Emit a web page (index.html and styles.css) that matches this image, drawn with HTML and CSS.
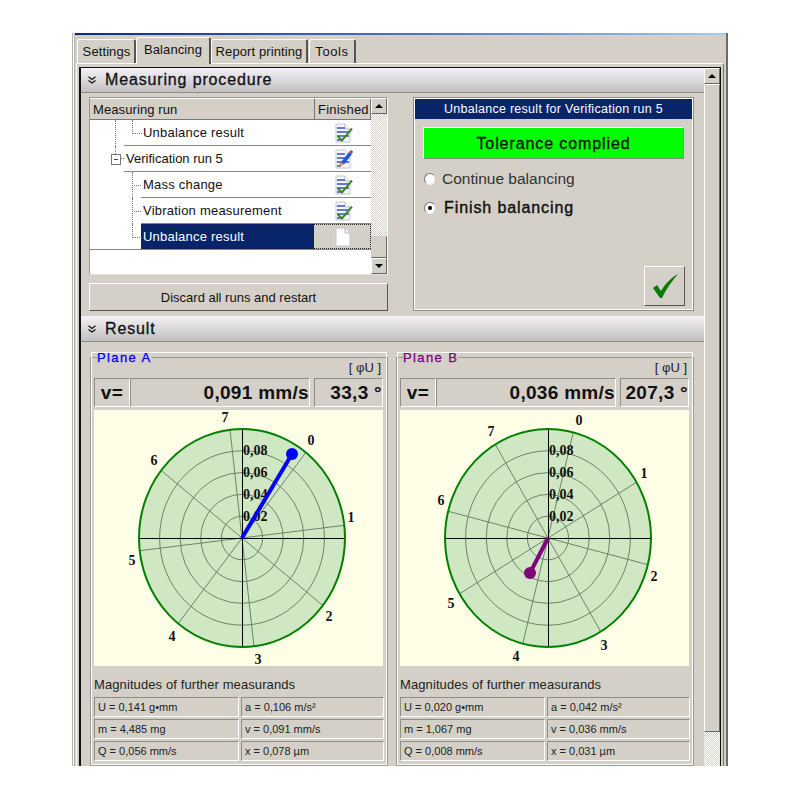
FILE: index.html
```html
<!DOCTYPE html>
<html lang="en">
<head>
  <meta charset="UTF-8">
  <title>Balancing</title>
  <link rel="stylesheet" href="styles.css">
</head>
<body>
  <svg class="defs" width="0" height="0">
    <defs>
      <symbol id="doc" viewBox="0 0 18 20">
        <path d="M1 1H10L15 6V19H1Z" fill="#fff" stroke="#c6c6d2"/>
        <path d="M10 1V6H15" fill="#f0f0f4" stroke="#b8b8c4"/>
      </symbol>
      <symbol id="doc_done" viewBox="0 0 18 20">
        <path d="M1 1H10L15 6V19H1Z" fill="#f6f6fb" stroke="#c6c6d2"/>
        <path d="M10 1V6H15" fill="#fff" stroke="#b8b8c4"/>
        <path d="M2 5H10M2 9H14M2 13H14M2 17H6" stroke="#6478e0" stroke-width="2"/>
        <path d="M2.500 13L7 17.500L17 5.500" fill="none" stroke="#3a8a20" stroke-width="2"/>
      </symbol>
      <symbol id="doc_edit" viewBox="0 0 18 20">
        <path d="M1 1H10L15 6V19H1Z" fill="#f6f6fb" stroke="#c6c6d2"/>
        <path d="M2 5H10M2 9H14M2 13H14M2 17H6" stroke="#6478e0" stroke-width="2"/>
        <path d="M6 13L14 3L17 5L9 15.500Z" fill="#2358d8"/>
        <path d="M3 17.500L6 13L9 15.500Z" fill="#e8862a"/>
        <path d="M14 3L16 1L18 2.500L17 5Z" fill="#c04030"/>
      </symbol>
      <symbol id="chevrons" viewBox="0 0 8 8">
        <path d="M.5 .8L4 3.400L7.500 .8M.5 4.400L4 7L7.500 4.400" fill="none" stroke="#111" stroke-width="1.200"/>
      </symbol>
    </defs>
  </svg>

  <div class="window">
    <div class="tabs">
      <span class="tab tab_settings">Settings</span>
      <span class="tab tab_active">Balancing</span>
      <span class="tab tab_report">Report printing</span>
      <span class="tab tab_tools">Tools</span>
    </div>

    <div class="tab_page">
      <div class="frame">
        <div class="frame_content">

          <div class="section_head section_procedure">
            <svg class="chevron" width="8" height="8"><use href="#chevrons"/></svg>Measuring procedure
          </div>
          <div class="procedure">
            <div class="left_col">
              <div class="tree">
                <div class="tree_main">
                  <div class="tree_header">
                    <span class="th_run">Measuring run</span>
                    <span class="th_done">Finished</span>
                  </div>
                  <div class="tree_row indent_2 elbow_last long_line"><span class="run_name">Unbalance result</span><span class="run_icon"><svg width="18" height="20"><use href="#doc_done"/></svg></span></div>
                  <div class="tree_row indent_1 has_minus"><span class="run_name">Verification run 5</span><span class="run_icon"><svg width="18" height="20"><use href="#doc_edit"/></svg></span></div>
                  <div class="tree_row indent_2 elbow"><span class="run_name">Mass change</span><span class="run_icon"><svg width="18" height="20"><use href="#doc_done"/></svg></span></div>
                  <div class="tree_row indent_2 elbow"><span class="run_name">Vibration measurement</span><span class="run_icon"><svg width="18" height="20"><use href="#doc_done"/></svg></span></div>
                  <div class="tree_row indent_2 elbow_last row_selected"><span class="run_name">Unbalance result</span><span class="run_icon"><svg width="18" height="20"><use href="#doc"/></svg></span></div>
                </div>
                <div class="tree_scroll">
                  <span class="sb_btn"><i class="arrow_up"></i></span>
                  <span class="sb_track"></span>
                  <span class="sb_thumb"></span>
                  <span class="sb_btn"><i class="arrow_down"></i></span>
                </div>
              </div>
              <button class="discard_btn">Discard all runs and restart</button>
            </div>

            <div class="result_box">
              <div class="result_title">Unbalance result for Verification run 5</div>
              <div class="tolerance">Tolerance complied</div>
              <label class="radio_row"><i class="radio"></i>Continue balancing</label>
              <label class="radio_row radio_on"><i class="radio"></i>Finish balancing</label>
              <button class="ok_btn">
                <svg width="28" height="26" viewBox="0 0 28 26"><path d="M2 15L6 12L10 18C14 11 20 5 27 1C21 8 15 16 11 25H9Z" fill="#0a7a0a"/></svg>
              </button>
            </div>
          </div>

          <div class="section_head">
            <svg class="chevron" width="8" height="8"><use href="#chevrons"/></svg>Result
          </div>
          <div class="planes">
            <fieldset class="plane plane_a">
              <legend>Plane A</legend>
              <div class="unit">[ &#966;U ]</div>
              <div class="value_row">
                <span class="v_cell v_name">v=</span>
                <span class="v_cell v_value">0,091 mm/s</span>
                <span class="v_cell v_angle">33,3 &#176;</span>
              </div>
              <svg class="polar" width="289" height="256" viewBox="0 0 289 256">
                <ellipse class="disc" cx="148" cy="128" rx="103" ry="109"/>
                <g class="rings">
                  <ellipse cx="148" cy="128" rx="20.600" ry="21.800"/>
                  <ellipse cx="148" cy="128" rx="41.200" ry="43.600"/>
                  <ellipse cx="148" cy="128" rx="61.800" ry="65.400"/>
                  <ellipse cx="148" cy="128" rx="82.400" ry="87.200"/>
                  <line x1="211.800" y1="42.500" x2="84.200" y2="213.500"/>
                  <line x1="250.300" y1="115.300" x2="45.700" y2="140.700"/>
                  <line x1="228.800" y1="195.500" x2="67.200" y2="60.500"/>
                  <line x1="160" y1="236.300" x2="136" y2="19.700"/>
                </g>
                <path class="axes" d="M45 128.500H251M148.500 19V237"/>
                <ellipse class="rim" cx="148" cy="128" rx="103" ry="109"/>
                <g class="radial">
                  <text x="149" y="45">0,08</text>
                  <text x="149" y="67">0,06</text>
                  <text x="149" y="89">0,04</text>
                  <text x="149" y="111">0,02</text>
                </g>
                <g class="spoke_num">
                  <text x="217" y="35">0</text>
                  <text x="257" y="112">1</text>
                  <text x="235" y="211">2</text>
                  <text x="164" y="254">3</text>
                  <text x="78" y="231">4</text>
                  <text x="38" y="155">5</text>
                  <text x="60" y="55">6</text>
                  <text x="131" y="12">7</text>
                </g>
                <line class="needle" x1="148" y1="128" x2="198" y2="44" stroke="#0000ff"/>
                <circle cx="198" cy="44" r="6" fill="#0000ff"/>
              </svg>
              <div class="more_title">Magnitudes of further measurands</div>
              <div class="more_grid">
                <span>U = 0,141 g&#8226;mm</span><span>a = 0,106 m/s&#178;</span>
                <span>m = 4,485 mg</span><span>v = 0,091 mm/s</span>
                <span>Q = 0,056 mm/s</span><span>x = 0,078 &#181;m</span>
              </div>
            </fieldset>

            <fieldset class="plane plane_b">
              <legend>Plane B</legend>
              <div class="unit">[ &#966;U ]</div>
              <div class="value_row">
                <span class="v_cell v_name">v=</span>
                <span class="v_cell v_value">0,036 mm/s</span>
                <span class="v_cell v_angle">207,3 &#176;</span>
              </div>
              <svg class="polar" width="289" height="256" viewBox="0 0 289 256">
                <ellipse class="disc" cx="148" cy="128" rx="103" ry="109"/>
                <g class="rings">
                  <ellipse cx="148" cy="128" rx="20.600" ry="21.800"/>
                  <ellipse cx="148" cy="128" rx="41.200" ry="43.600"/>
                  <ellipse cx="148" cy="128" rx="61.800" ry="65.400"/>
                  <ellipse cx="148" cy="128" rx="82.400" ry="87.200"/>
                  <line x1="173.300" y1="22.300" x2="122.700" y2="233.700"/>
                  <line x1="236.500" y1="72.200" x2="59.500" y2="183.800"/>
                  <line x1="247.800" y1="154.700" x2="48.200" y2="101.300"/>
                  <line x1="200.700" y1="221.600" x2="95.300" y2="34.400"/>
                </g>
                <path class="axes" d="M45 128.500H251M148.500 19V237"/>
                <ellipse class="rim" cx="148" cy="128" rx="103" ry="109"/>
                <g class="radial">
                  <text x="149" y="45">0,08</text>
                  <text x="149" y="67">0,06</text>
                  <text x="149" y="89">0,04</text>
                  <text x="149" y="111">0,02</text>
                </g>
                <g class="spoke_num">
                  <text x="179" y="15">0</text>
                  <text x="244" y="68">1</text>
                  <text x="254" y="171">2</text>
                  <text x="204" y="240">3</text>
                  <text x="116" y="251">4</text>
                  <text x="51" y="198">5</text>
                  <text x="41" y="95">6</text>
                  <text x="91" y="26">7</text>
                </g>
                <line class="needle" x1="148" y1="128" x2="130" y2="163" stroke="#800080"/>
                <circle cx="130" cy="163" r="6" fill="#800080"/>
              </svg>
              <div class="more_title">Magnitudes of further measurands</div>
              <div class="more_grid">
                <span>U = 0,020 g&#8226;mm</span><span>a = 0,042 m/s&#178;</span>
                <span>m = 1,067 mg</span><span>v = 0,036 mm/s</span>
                <span>Q = 0,008 mm/s</span><span>x = 0,031 &#181;m</span>
              </div>
            </fieldset>
          </div>
        </div>

        <div class="main_scroll">
          <span class="sb_btn"><i class="arrow_up"></i></span>
          <span class="main_thumb"></span>
          <span class="sb_track"></span>
        </div>
      </div>
    </div>
  </div>
</body>
</html>
```

FILE: styles.css
```css
* {
  box-sizing: border-box;
  font-family: "Liberation Sans", Arial, sans-serif;
}
html, body {
  background: #fff;
}
body {
  margin: 0;
  padding: 33px 72px 0 72px;
  height: 800px;
  overflow: hidden;
}
.defs {
  display: block;
  height: 0;
}
.window {
  position: relative;
  width: 656px;
  height: 733px;
  overflow: hidden;
  background: #d4d0c8;
  background-clip: padding-box;
  border-left: 3px double #b5b3ae;
  border-right: 2px solid #6d6b66;
  padding: 4px 0 0 1px;
}
/* the blue title edge of the cut-off window */
.window::before {
  content: "";
  position: absolute;
  left: 0;
  right: 0;
  top: 0;
  height: 2px;
  background: linear-gradient(90deg, #0a2a8a, #5d7fc8 60%, #a6caf0);
}

/* tabs */
.tabs {
  display: flex;
  align-items: flex-end;
  height: 26px;
  padding-left: 1px;
}
.tab {
  height: 24px;
  padding-top: 4px;
  font-size: 13px;
  line-height: 15px;
  letter-spacing: .1px;
  text-align: center;
  color: #111;
  background: #d4d0c8;
  border: 1px solid #fff;
  border-bottom: 0;
  border-right: 2px solid #555;
  border-radius: 3px 3px 0 0;
}
.tab_settings {
  width: 59px;
  padding-left: 1px;
}
.tab_active {
  position: relative;
  z-index: 1;
  width: 75px;
  height: 27px;
  margin-bottom: -1px;
}
.tab_report {
  width: 97px;
}
.tab_tools {
  width: 47px;
  margin-left: 1px;
  letter-spacing: .6px;
}
.tab_page {
  width: 648px;
  height: 704px;
  border-top: 1px solid #fff;
  border-left: 1px solid #fff;
  border-right: 1px solid #77756f;
  padding: 3px 0 0 2px;
}
.frame {
  display: flex;
  width: 642px;
  height: 700px;
  border: 1px solid #111;
  border-left-width: 2px;
  border-bottom: 0;
}
.frame_content {
  flex: 1;
  min-width: 0;
}

/* section headers */
.section_head {
  display: flex;
  align-items: center;
  height: 26px;
  padding-left: 7px;
  background: linear-gradient(#f4f2f6, #c2bfc0);
  border-bottom: 1px solid #8d8b87;
  font-size: 16px;
  letter-spacing: .85px;
  -webkit-text-stroke: .3px #111;
  color: #111;
}
.section_procedure {
  height: 25px;
}
.chevron {
  flex: none;
  margin-right: 9px;
}

/* procedure */
.procedure {
  display: flex;
  height: 223px;
  padding: 4px 9px 0 8px;
  gap: 25px;
}
.left_col {
  width: 299px;
}
.tree {
  display: flex;
  width: 299px;
  height: 178px;
  background: #fff;
  border: 1px solid #9a9892;
  border-right-color: #fff;
  border-bottom-color: #e4e2dc;
}
.tree_main {
  width: 282px;
}
.tree_header {
  display: flex;
  height: 22px;
  background: #d4d0c8;
  font-size: 13px;
  line-height: 22px;
  letter-spacing: .1px;
  color: #111;
  border-bottom: 1px solid #777;
}
.th_run {
  width: 225px;
  padding-left: 3px;
  border-right: 1px solid #777;
  border-top: 1px solid #fff;
}
.th_done {
  flex: 1;
  padding-left: 3px;
  letter-spacing: .2px;
  border-right: 1px solid #777;
  border-top: 1px solid #fff;
}
.tree_row {
  position: relative;
  display: flex;
  height: 26px;
  font-size: 13px;
  line-height: 26px;
  color: #111;
}
.run_name {
  flex: 1;
  align-self: stretch;
  letter-spacing: .22px;
  border-bottom: 1px solid #888;
}
.indent_1 .run_name {
  margin-left: 34px;
  padding-left: 2px;
  letter-spacing: 0;
}
.indent_2 .run_name {
  margin-left: 51px;
  padding-left: 2px;
}
.long_line .run_name {
  margin-left: 34px;
  padding-left: 19px;
}
.run_icon {
  width: 57px;
  padding: 3px 0 0 21px;
  border-bottom: 1px solid #888;
}
.run_icon svg {
  display: block;
}
/* tree guide lines lie over the row background */
.tree_row::before {
  content: "";
  position: absolute;
  left: 42px;
  top: 0;
  width: 9px;
  height: 13px;
  border-left: 1px dotted #777;
  border-bottom: 1px dotted #777;
}
.elbow::before {
  height: 26px;
  border-bottom: 0;
}
.elbow::after {
  content: "";
  position: absolute;
  left: 42px;
  top: 13px;
  width: 9px;
  border-top: 1px dotted #777;
}
.long_line::after {
  content: "";
  position: absolute;
  left: 25px;
  top: 0;
  height: 26px;
  border-left: 1px dotted #777;
}
.has_minus::before {
  left: 25px;
  top: 0;
  height: 8px;
  width: 0;
  border-bottom: 0;
}
.has_minus::after {
  content: "";
  position: absolute;
  left: 21px;
  top: 8px;
  width: 8px;
  height: 9px;
  border: 1px solid #777;
  background: linear-gradient(#444, #444) center / 4px 1px no-repeat #fff;
}
.has_minus .run_name::before {
  content: "";
  position: absolute;
  left: 29px;
  top: 12px;
  width: 5px;
  border-top: 1px dotted #777;
}
.row_selected {
  border-bottom: 1px solid #888;
}
.row_selected .run_name {
  padding-left: 1px;
  background: #08246b;
  color: #fff;
  border: 1px dotted #222;
  border-right: 0;
  line-height: 24px;
}
.row_selected .run_icon {
  background: #d4d0c8;
  border: 1px dotted #222;
  border-left: 0;
  padding-top: 2px;
}

/* scrollbars */
.tree_scroll {
  display: flex;
  flex-direction: column;
  width: 16px;
  height: 176px;
}
.main_scroll {
  display: flex;
  flex-direction: column;
  flex: none;
  width: 16px;
  height: 699px;
}
.sb_btn {
  display: flex;
  flex: none;
  align-items: center;
  justify-content: center;
  height: 16px;
  background: #d4d0c8;
  border: 1px solid;
  border-color: #fff #666 #666 #fff;
}
.sb_track {
  flex: 1;
  background-color: #fff;
  background-image: conic-gradient(#d4d0c8 25%, #fff 0 50%, #d4d0c8 0 75%, #fff 0);
  background-size: 2px 2px;
}
.sb_thumb {
  flex: none;
  height: 22px;
  background: #d4d0c8;
  border: 1px solid;
  border-color: #d4d0c8 #666 #666 #d4d0c8;
}
.main_thumb {
  flex: none;
  height: 648px;
  background: #d4d0c8;
  border: 1px solid;
  border-color: #fff #666 #666 #fff;
}
.arrow_up {
  border: 4px solid transparent;
  border-top: 0;
  border-bottom: 4px solid #000;
}
.arrow_down {
  border: 4px solid transparent;
  border-bottom: 0;
  border-top: 4px solid #000;
}

/* buttons */
.discard_btn {
  display: block;
  width: 299px;
  height: 28px;
  margin-top: 8px;
  background: #d4d0c8;
  border: 1px solid;
  border-color: #fff #555 #555 #fff;
  font-size: 13px;
  color: #111;
}

/* result box */
.result_box {
  display: flex;
  flex-direction: column;
  position: relative;
  width: 281px;
  height: 214px;
  border: 1px solid #8f8d88;
  outline: 1px solid #fff;
  outline-offset: -2px;
  padding: 1px;
}
.result_title {
  height: 20px;
  background: #08246b;
  color: #fff;
  font-size: 12.500px;
  line-height: 20px;
  letter-spacing: .27px;
  text-align: center;
}
.tolerance {
  height: 32px;
  margin: 8px 8px 0 8px;
  background: #00ff00;
  border: 1px solid;
  border-color: #fff #888 #888 #fff;
  font-size: 16px;
  letter-spacing: .9px;
  -webkit-text-stroke: .3px #111;
  line-height: 32px;
  text-align: center;
  color: #111;
}
.radio_row {
  display: flex;
  align-items: center;
  gap: 6px;
  margin: 10px 0 0 9px;
  height: 19px;
  font-size: 15.500px;
  color: #333;
}
.radio_on {
  gap: 8px;
  font-size: 16px;
  letter-spacing: .9px;
  -webkit-text-stroke: .4px #111;
  color: #111;
}
.radio {
  flex: none;
  width: 12px;
  height: 12px;
  border-radius: 50%;
  background: #fff;
  border: 1px solid;
  border-color: #777 #ccc #eee #777;
}
.radio_on .radio {
  background: radial-gradient(circle, #000 1.500px, #fff 2.500px);
}
.ok_btn {
  display: flex;
  align-items: center;
  justify-content: center;
  position: absolute;
  right: 8px;
  bottom: 4px;
  width: 41px;
  height: 40px;
  padding: 0;
  background: #d4d0c8;
  border: 1px solid;
  border-color: #fff #555 #555 #fff;
}

/* result */
.planes {
  display: flex;
  gap: 8px;
  padding: 9px 9px 0 9px;
}
.plane {
  position: relative;
  flex: none;
  width: 298px;
  height: 415px;
  min-width: 0;
  margin: 0;
  padding: 0 3px;
  border: 1px solid #9a9892;
  outline: 1px solid #fff;
  outline-offset: -2px;
}
.plane legend {
  padding: 0;
  margin-left: 3px;
  font-size: 13px;
  line-height: 13px;
  letter-spacing: 1.4px;
  -webkit-text-stroke: .3px;
}
.plane_a legend {
  color: #0000ff;
}
.plane_b legend {
  color: #800080;
}
.unit {
  height: 14px;
  padding-right: 3px;
  font-size: 13px;
  line-height: 8px;
  text-align: right;
  color: #222;
}
.value_row {
  display: flex;
  height: 29px;
}
.v_cell {
  height: 29px;
  font-size: 19px;
  font-weight: 700;
  line-height: 28px;
  letter-spacing: .3px;
  color: #111;
  text-align: right;
  border: 1px solid;
  border-color: #8f8d88 #fff #fff #8f8d88;
}
.v_name {
  width: 36px;
  text-align: center;
}
.v_value {
  width: 180px;
  margin-right: 4px;
}
.v_angle {
  width: 69px;
}
.polar {
  display: block;
  margin-top: 3px;
  background: #ffffe8;
}
.disc {
  fill: #cfe7c2;
}
.rim {
  fill: none;
  stroke: #008000;
  stroke-width: 2;
}
.rings ellipse, .rings line {
  fill: none;
  stroke: #6b846b;
  stroke-width: 1;
}
.axes {
  stroke: #000;
  stroke-width: 1;
  fill: none;
  shape-rendering: crispEdges;
}
.radial text, .spoke_num text {
  font-family: "Liberation Serif", serif;
  font-size: 14px;
  font-weight: 700;
  fill: #111;
}
.spoke_num text {
  text-anchor: middle;
}
.needle {
  stroke-width: 4;
}
.more_title {
  height: 18px;
  margin-top: 10px;
  font-size: 13px;
  line-height: 18px;
  letter-spacing: .1px;
  color: #222;
}
.more_grid {
  display: grid;
  grid-template-columns: 145px 143px;
  grid-auto-rows: 20px;
  gap: 2px;
  margin-top: 3px;
}
.more_grid span {
  padding-left: 3px;
  font-size: 11px;
  line-height: 18px;
  color: #222;
  border: 1px solid;
  border-color: #8f8d88 #fff #fff #8f8d88;
}
```
